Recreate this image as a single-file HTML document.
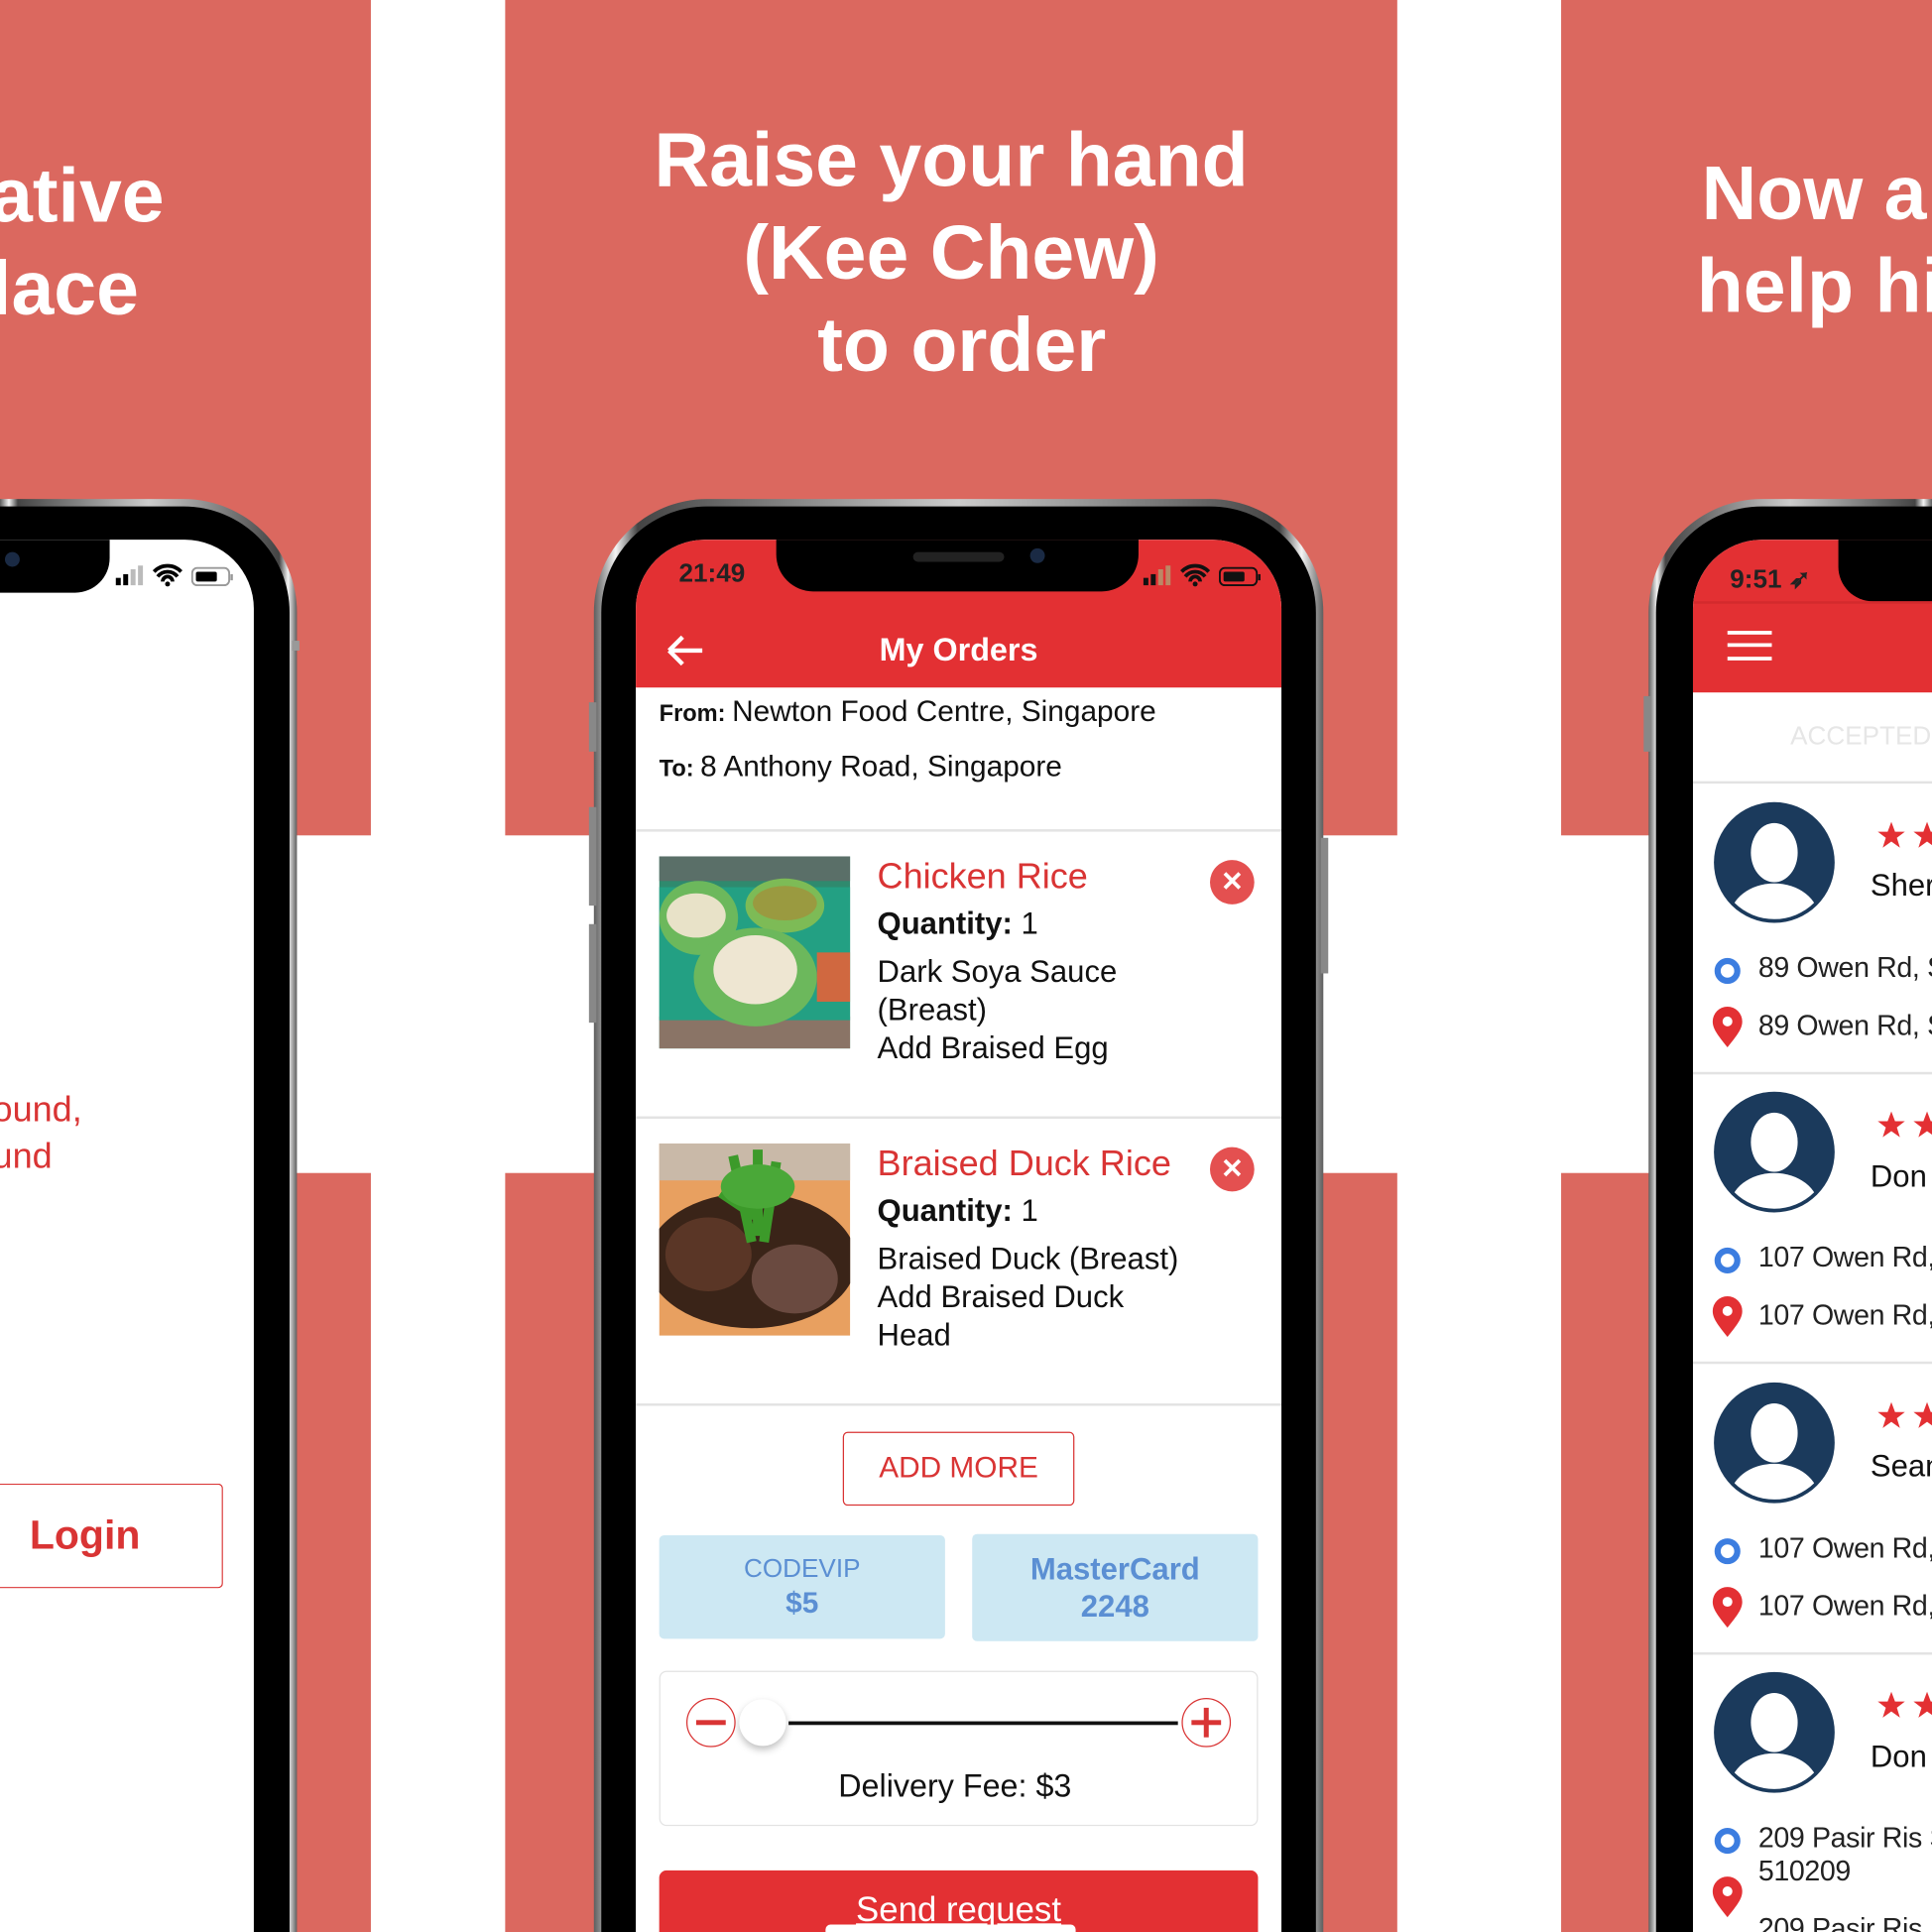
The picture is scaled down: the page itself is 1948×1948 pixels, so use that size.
<!DOCTYPE html>
<html><head><meta charset="utf-8"><style>
html,body{margin:0;padding:0;width:1948px;height:1948px;overflow:hidden;background:#fff}
#st{position:absolute;left:0;top:0;width:1568px;height:1568px;transform:scale(1.242347);transform-origin:0 0;overflow:hidden;background:#fff;font-family:"Liberation Sans",sans-serif}
.a{position:absolute}
.red{background:#DB685F}
.h{color:#fff;font-weight:bold;font-size:62px;line-height:76px;white-space:nowrap}
.frame{position:absolute;top:405px;height:1163px;border-radius:92px 92px 0 0;background:linear-gradient(90deg,#5e5e5e,#f4f4f4 3%,#444 6%,#ccc 50%,#444 94%,#f4f4f4 97%,#5e5e5e);overflow:hidden}
.bez{position:absolute;left:6px;top:6px;right:6px;bottom:0;border-radius:86px 86px 0 0;background:#000}
.scr{position:absolute;top:438px;height:1130px;border-radius:56px 56px 0 0;overflow:hidden;background:#fff}
.t{position:absolute;white-space:nowrap}
.sep{position:absolute;left:0;right:0;height:2px;background:#e3e3e3}
.x{position:absolute;width:36px;height:36px;border-radius:50%;background:#E45050;color:#fff;font-weight:bold;font-size:22px;line-height:36px;text-align:center}
.r{letter-spacing:-0.3px}
</style></head><body><div id="st">
<div class="a red" style="left:0;top:0;width:301px;height:678px"></div>
<div class="a red" style="left:0;top:952px;width:301px;height:616px"></div>
<div class="a red" style="left:410px;top:0;width:724px;height:678px"></div>
<div class="a red" style="left:410px;top:952px;width:724px;height:616px"></div>
<div class="a red" style="left:1267px;top:0;width:301px;height:678px"></div>
<div class="a red" style="left:1267px;top:952px;width:301px;height:616px"></div>

<div class="a h" style="left:-8px;top:122px">ative</div>
<div class="a h" style="left:-8px;top:197px">lace</div>
<div class="a h" style="left:410px;width:724px;top:93px;text-align:center;line-height:75px">Raise your hand<br>(Kee Chew)<br>&nbsp;to order</div>
<div class="a h" style="left:1381px;top:120px">Now a</div>
<div class="a h" style="left:1377px;top:195px">help hi</div>

<div class="frame" style="left:0;width:241px;border-radius:0 92px 0 0"><div class="bez" style="left:0;border-radius:0 86px 0 0"></div></div>
<div class="a" style="left:237px;top:520px;width:6px;height:8px;background:#999"></div>
<div class="scr" style="left:0;width:206px;border-radius:0 56px 0 0">
  <div class="a" style="left:0;top:0;width:89px;height:43px;background:#000;border-radius:0 0 28px 0"></div>
</div>
<div class="a" style="left:4px;top:448px;width:12px;height:12px;border-radius:50%;background:#1a2a44"></div>
<svg class="a" style="left:92px;top:457px" width="100" height="20" viewBox="0 0 100 20">
 <rect x="2" y="12" width="4" height="6" fill="#000"/><rect x="8" y="9" width="4" height="9" fill="#000"/><rect x="14" y="5" width="4" height="13" fill="#bbb"/><rect x="20" y="2" width="4" height="16" fill="#bbb"/>
 <path d="M33 7a15 15 0 0 1 22 0M36 11a10 10 0 0 1 16 0M40 15a4 4 0 0 1 8 0" stroke="#000" stroke-width="3" fill="none"/><circle cx="44" cy="17" r="2"/>
 <rect x="64" y="4" width="30" height="14" rx="4" fill="none" stroke="#999" stroke-width="1.5"/><rect x="67" y="7" width="17" height="8" rx="1.5" fill="#000"/><rect x="95" y="9" width="2" height="5" fill="#999"/>
</svg>
<div class="t" style="left:-6px;top:882px;color:#D93434;font-size:29px;line-height:38px">ound,<br>und</div>
<div class="a" style="left:0;top:1204px;width:180px;height:83px;border:1.5px solid #D93434;border-left:none;border-radius:0 4px 4px 0"></div>
<div class="t" style="left:24px;top:1227px;color:#D93434;font-size:33px;font-weight:bold">Login</div>

<div class="frame" style="left:482px;width:592px"><div class="bez"></div></div>
<div class="a" style="left:478px;top:570px;width:6px;height:40px;background:#888"></div>
<div class="a" style="left:478px;top:655px;width:6px;height:80px;background:#888"></div>
<div class="a" style="left:478px;top:750px;width:6px;height:80px;background:#888"></div>
<div class="a" style="left:1072px;top:680px;width:6px;height:110px;background:#888"></div>
<div class="scr" style="left:516px;width:524px">
  <div class="a" style="left:0;top:0;width:524px;height:120px;background:#E33033"></div>
  <div class="a" style="left:114px;top:-2px;width:294px;height:44px;background:#000;border-radius:0 0 30px 30px"></div>
  <div class="a" style="left:225px;top:10px;width:74px;height:8px;border-radius:4px;background:#222"></div>
  <div class="a" style="left:320px;top:7px;width:12px;height:12px;border-radius:50%;background:#1a2a44"></div>
  <div class="t" style="left:35px;top:16px;font-size:21px;font-weight:bold;color:#222">21:49</div>
  <svg class="a" style="left:410px;top:19px" width="100" height="20" viewBox="0 0 100 20">
   <rect x="2" y="12" width="4" height="6" fill="#111"/><rect x="8" y="9" width="4" height="9" fill="#111"/><rect x="14" y="5" width="4" height="13" fill="#b86"/><rect x="20" y="2" width="4" height="16" fill="#b86"/>
   <path d="M33 7a15 15 0 0 1 22 0M36 11a10 10 0 0 1 16 0M40 15a4 4 0 0 1 8 0" stroke="#111" stroke-width="3" fill="none"/><circle cx="44" cy="17" r="2" fill="#111"/>
   <rect x="64" y="4" width="30" height="14" rx="4" fill="none" stroke="#111" stroke-width="1.5"/><rect x="67" y="7" width="17" height="8" rx="1.5" fill="#111"/><rect x="95" y="9" width="2" height="5" fill="#111"/>
  </svg>
  <svg class="a" style="left:24px;top:76px" width="32" height="28" viewBox="0 0 32 28"><path d="M3 14H30M3 14L14 3M3 14L14 25" stroke="#fff" stroke-width="3.5" fill="none"/></svg>
  <div class="t" style="left:0;width:524px;text-align:center;top:74px;color:#fff;font-size:26px;font-weight:bold">My Orders</div>
  <div class="t" style="left:19px;top:126px;font-size:24px;color:#111"><span style="font-size:19px;font-weight:bold">From: </span>Newton Food Centre, Singapore</div>
  <div class="t" style="left:19px;top:171px;font-size:24px;color:#111"><span style="font-size:19px;font-weight:bold">To: </span>8 Anthony Road, Singapore</div>
  <div class="sep" style="top:235px"></div>
  <svg class="a" style="left:19px;top:257px" width="155" height="156" viewBox="0 0 155 156">
   <rect width="155" height="156" fill="#2f8a6e"/><rect width="155" height="20" fill="#5a6f68"/><rect y="130" width="155" height="26" fill="#8a7466"/>
   <rect x="0" y="25" width="155" height="108" fill="#23a083"/>
   <ellipse cx="32" cy="50" rx="32" ry="30" fill="#6cb85c"/><ellipse cx="30" cy="48" rx="24" ry="18" fill="#e8e2c8"/>
   <ellipse cx="102" cy="40" rx="32" ry="22" fill="#7dbb56"/><ellipse cx="102" cy="38" rx="26" ry="14" fill="#9a9a40"/>
   <ellipse cx="78" cy="98" rx="50" ry="40" fill="#6cb85c"/><ellipse cx="78" cy="92" rx="34" ry="28" fill="#eee6d2"/>
   <rect x="128" y="78" width="27" height="40" fill="#d06840"/>
  </svg>
  <div class="t" style="left:196px;top:258px;color:#D93434;font-size:29px">Chicken Rice</div>
  <div class="x" style="left:466px;top:260px">✕</div>
  <div class="t" style="left:196px;top:298px;font-size:25px;color:#111"><b>Quantity:</b> 1</div>
  <div class="t" style="left:196px;top:336px;font-size:25px;color:#111;line-height:31px">Dark Soya Sauce<br>(Breast)<br>Add Braised Egg</div>
  <div class="sep" style="top:468px"></div>
  <svg class="a" style="left:19px;top:490px" width="155" height="156" viewBox="0 0 155 156">
   <rect width="155" height="156" fill="#e8a060"/><rect width="155" height="30" fill="#c9b9a8"/>
   <ellipse cx="75" cy="95" rx="85" ry="55" fill="#3a2418"/><ellipse cx="40" cy="90" rx="35" ry="30" fill="#5a3626"/><ellipse cx="110" cy="110" rx="35" ry="28" fill="#6a4a40"/>
   <path d="M60 10L75 80M80 5L80 75M95 15L85 80M50 40L80 60" stroke="#3c9a2a" stroke-width="8"/><ellipse cx="80" cy="35" rx="30" ry="18" fill="#4aa838"/>
  </svg>
  <div class="t" style="left:196px;top:491px;color:#D93434;font-size:29px">Braised Duck Rice</div>
  <div class="x" style="left:466px;top:493px">✕</div>
  <div class="t" style="left:196px;top:531px;font-size:25px;color:#111"><b>Quantity:</b> 1</div>
  <div class="t" style="left:196px;top:569px;font-size:25px;color:#111;line-height:31px">Braised Duck (Breast)<br>Add Braised Duck<br>Head</div>
  <div class="sep" style="top:701px"></div>
  <div class="a" style="left:168px;top:724px;width:186px;height:58px;border:1.5px solid #D93434;border-radius:4px;color:#D93434;font-size:24px;text-align:center;line-height:58px">ADD MORE</div>
  <div class="a" style="left:19px;top:808px;width:232px;height:84px;background:#CDE8F3;border-radius:4px;color:#5B8FD3;text-align:center;font-size:21px;line-height:28px;padding-top:14px;box-sizing:border-box">CODEVIP<br><b style="font-size:24px">$5</b></div>
  <div class="a" style="left:273px;top:807px;width:232px;height:87px;background:#CDE8F3;border-radius:4px;color:#5B8FD3;text-align:center;font-size:25px;font-weight:bold;line-height:30px;padding-top:14px;box-sizing:border-box">MasterCard<br>2248</div>
  <div class="a" style="left:19px;top:918px;width:486px;height:126px;border:1.5px solid #e3e3e3;border-radius:6px;box-sizing:border-box"></div>
  <div class="a" style="left:41px;top:940px;width:38px;height:38px;border:1.5px solid #D93434;border-radius:50%"></div>
  <div class="a" style="left:49px;top:958px;width:24px;height:4px;background:#D93434"></div>
  <div class="a" style="left:124px;top:959px;width:316px;height:3px;background:#111"></div>
  <div class="a" style="left:443px;top:940px;width:38px;height:38px;border:1.5px solid #D93434;border-radius:50%"></div>
  <div class="a" style="left:451px;top:958px;width:24px;height:4px;background:#D93434"></div>
  <div class="a" style="left:461px;top:948px;width:4px;height:24px;background:#D93434"></div>
  <div class="a" style="left:84px;top:941px;width:38px;height:38px;border-radius:50%;background:#fff;box-shadow:0 3px 6px rgba(0,0,0,.25)"></div>
  <div class="t" style="left:0;width:518px;text-align:center;top:996px;font-size:26px;color:#111">Delivery Fee: $3</div>
  <div class="a" style="left:19px;top:1080px;width:486px;height:50px;background:#E33033;border-radius:6px 6px 0 0"></div>
  <div class="t" style="left:0;width:524px;text-align:center;top:1096px;font-size:28px;color:#fff;text-decoration:underline">Send request</div>
  <div class="a" style="left:154px;top:1124px;width:203px;height:6px;border-radius:4px 4px 0 0;background:#fff"></div>
</div>

<div class="frame" style="left:1338px;width:230px;border-radius:92px 0 0 0"><div class="bez" style="right:0;border-radius:86px 0 0 0"></div></div>
<div class="a" style="left:1334px;top:565px;width:6px;height:45px;background:#888"></div>
<div class="scr" style="left:1374px;width:194px;border-radius:56px 0 0 0">
  <div class="a" style="left:0;top:0;width:194px;height:124px;background:#E33033"></div>
  <div class="a" style="left:118px;top:-2px;width:76px;height:52px;background:#000;border-radius:0 0 0 28px"></div>
  <div class="a" style="left:0;top:50px;width:194px;height:2px;background:#d32a2d"></div>
  <div class="t" style="left:30px;top:20px;font-size:21px;font-weight:bold;color:#222">9:51 ➶</div>
  <div class="a" style="left:28px;top:74px;width:36px;height:3px;background:#fff;box-shadow:0 10px 0 #fff,0 21px 0 #fff"></div>
  <div class="t" style="left:79px;top:148px;font-size:21px;color:#e6e6e6">ACCEPTED</div>
  <div class="sep" style="top:196px"></div>
</div>
<svg class="a" style="left:1374px;top:600px" width="194" height="968" viewBox="0 0 194 968">
 <defs><g id="it">
  <circle cx="66" cy="100" r="49" fill="#1B3A5C"/>
  <clipPath id="c"><circle cx="66" cy="100" r="46"/></clipPath>
  <g clip-path="url(#c)"><ellipse cx="66" cy="145" rx="36" ry="28" fill="#fff"/><ellipse cx="66" cy="92" rx="19" ry="24" fill="#fff"/></g>
  <path d="M161 67l3 8h8l-6.5 5 2.5 8-7-5-7 5 2.5-8-6.5-5h8z" fill="#E33033"/>
  <path d="M190 67l3 8h8l-6.5 5 2.5 8-7-5-7 5 2.5-8-6.5-5h8z" fill="#E33033"/>
  <circle cx="28" cy="188" r="8" fill="none" stroke="#3C7DE0" stroke-width="5"/>
  <path d="M28 250c-8-10-12-15-12-21a12 12 0 0 1 24 0c0 6-4 11-12 21z" fill="#E33033"/><circle cx="28" cy="229" r="4" fill="#fff"/>
 </g></defs>
 <use href="#it" y="0"/><use href="#it" y="235"/><use href="#it" y="471"/><use href="#it" y="706"/>
 <rect y="270" width="194" height="2" fill="#e3e3e3"/><rect y="505" width="194" height="2" fill="#e3e3e3"/><rect y="741" width="194" height="2" fill="#e3e3e3"/>
</svg>
<div class="a" style="left:1420px;top:690px;width:148px;height:878px;overflow:hidden">
<div class="t" style="left:98px;top:15px;font-size:25px;color:#111">Sher</div>
<div class="t" style="left:98px;top:251px;font-size:25px;color:#111">Don</div>
<div class="t" style="left:98px;top:486px;font-size:25px;color:#111">Sean</div>
<div class="t" style="left:98px;top:722px;font-size:25px;color:#111">Don</div>
<div class="t r" style="left:7px;top:82px;font-size:23px;color:#222">89 Owen Rd, S</div>
<div class="t r" style="left:7px;top:129px;font-size:23px;color:#222">89 Owen Rd, S</div>
<div class="t r" style="left:7px;top:317px;font-size:23px;color:#222">107 Owen Rd,</div>
<div class="t r" style="left:7px;top:364px;font-size:23px;color:#222">107 Owen Rd,</div>
<div class="t r" style="left:7px;top:553px;font-size:23px;color:#222">107 Owen Rd,</div>
<div class="t r" style="left:7px;top:600px;font-size:23px;color:#222">107 Owen Rd,</div>
<div class="t r" style="left:7px;top:788px;font-size:23px;color:#222;line-height:27px">209 Pasir Ris S<br>510209</div>
<div class="t r" style="left:7px;top:862px;font-size:23px;color:#222">209 Pasir Ris</div>
</div>
</div></body></html>
